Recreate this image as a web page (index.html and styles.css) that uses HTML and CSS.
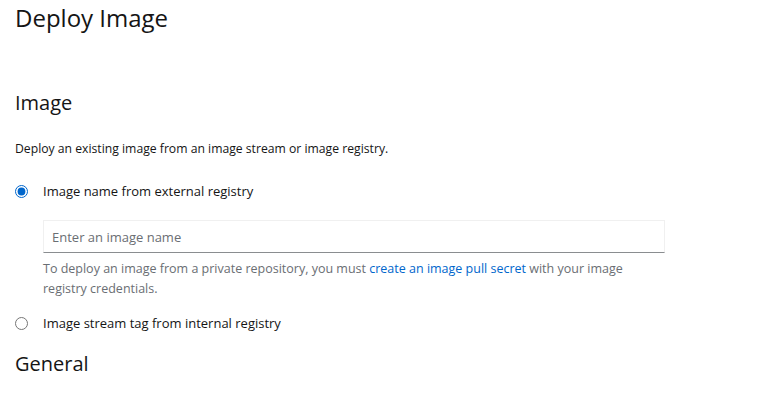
FILE: index.html
```html
<!DOCTYPE html>
<html>
<head>
<meta charset="utf-8">
<link rel="stylesheet" href="styles.css">
</head>
<body>
<div class="page">
  <h1 class="title">Deploy Image</h1>
  <section class="section">
    <h2 class="heading">Image</h2>
    <p class="desc">Deploy an existing image from an image stream or image registry.</p>
    <label class="radio-row">
      <input type="radio" name="src" checked>
      <span class="radio-label">Image name from external registry</span>
    </label>
    <div class="nested">
      <input class="text-input" type="text" placeholder="Enter an image name">
      <p class="helper">To deploy an image from a private repository, you must <a class="link" href="#">create an image pull secret</a> with your image registry credentials.</p>
    </div>
    <label class="radio-row second">
      <input type="radio" name="src">
      <span class="radio-label">Image stream tag from internal registry</span>
    </label>
    <h2 class="heading general">General</h2>
  </section>
</div>
</body>
</html>
```
FILE: styles.css
```css
html, body {
  margin: 0;
  padding: 0;
  background: #fff;
}
body {
  font-family: "Open Sans", "Noto Sans", sans-serif;
  color: #151515;
}
.page {
  padding: 0 15px;
}
.title {
  margin: 0;
  padding-top: 2px;
  font-size: 24px;
  font-weight: 400;
  line-height: 32px;
  color: #151515;
}
.section {
  padding-top: 56px;
}
.heading {
  margin: 0;
  font-size: 20px;
  font-weight: 400;
  line-height: 26px;
}
.desc {
  margin: 24px 0 0;
  font-size: 12.2px;
  line-height: 18px;
  color: #151515;
}
.radio-row {
  display: flex;
  align-items: center;
  gap: 15px;
  margin-top: 23px;
  height: 20px;
}
.radio-row input {
  margin: 0;
  width: 13px;
  height: 13px;
  accent-color: #0066cc;
}
.radio-label {
  font-size: 13px;
  line-height: 20px;
  color: #151515;
}
.nested {
  padding-left: 28px;
  padding-top: 19px;
  width: 622px;
}
.text-input {
  display: block;
  box-sizing: border-box;
  width: 622px;
  height: 33px;
  padding: 0 8px;
  border: 1px solid #f0f0f0;
  border-bottom: 1px solid #8a8d90;
  font-family: inherit;
  font-size: 13px;
  color: #151515;
  outline: none;
}
.text-input::placeholder {
  color: #6a6e73;
}
.helper {
  margin: 6px 0 0;
  font-size: 12.5px;
  line-height: 20px;
  color: #6a6e73;
}
.link {
  color: #0066cc;
  text-decoration: none;
}
.second {
  margin-top: 14px;
}
.general {
  margin-top: 18px;
}
```
